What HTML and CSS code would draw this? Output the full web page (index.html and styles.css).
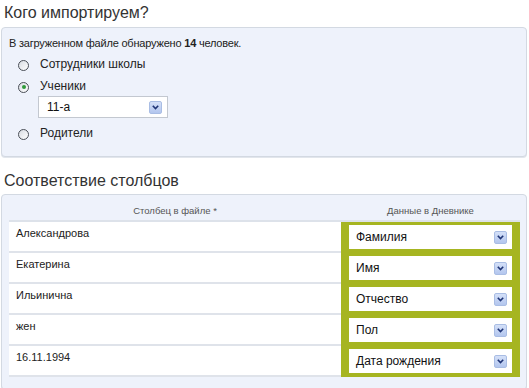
FILE: index.html
```html
<!DOCTYPE html>
<html lang="ru">

<head>
    <meta charset="UTF-8">
    <meta name="viewport" content="width=device-width, initial-scale=1.0">
    <title>Импорт</title>
    <link rel="stylesheet" href="styles.css">
</head>

<body>
    <div class="page">
        <h2 class="title">Кого импортируем?</h2>
        <div class="panel panel-who">
            <p class="note">В загруженном файле обнаружено <b>14</b> человек.</p>
            <div class="radio-row">
                <span class="radio"></span>
                <span class="radio-label">Сотрудники школы</span>
            </div>
            <div class="radio-row">
                <span class="radio checked"></span>
                <span class="radio-label">Ученики</span>
            </div>
            <div class="select select-class">
                <span class="select-text">11-а</span>
                <span class="select-btn">
                    <svg width="7" height="5" viewBox="0 0 7 5"><path d="M0.8 0.8 L3.5 3.6 L6.2 0.8" fill="none" stroke="#1f3475" stroke-width="1.6"/></svg>
                </span>
            </div>
            <div class="radio-row radio-last">
                <span class="radio"></span>
                <span class="radio-label">Родители</span>
            </div>
        </div>

        <h2 class="title title-second">Соответствие столбцов</h2>
        <div class="panel panel-map">
            <table class="map">
                <thead>
                    <tr>
                        <th class="col-file">Столбец в файле *</th>
                        <th class="col-diary">Данные в Дневнике</th>
                    </tr>
                </thead>
                <tbody>
                    <tr>
                        <td class="cell-file">Александрова</td>
                        <td class="cell-diary">
                            <div class="select"><span class="select-text">Фамилия</span><span class="select-btn"><svg width="7" height="5" viewBox="0 0 7 5"><path d="M0.8 0.8 L3.5 3.6 L6.2 0.8" fill="none" stroke="#1f3475" stroke-width="1.6"/></svg></span></div>
                        </td>
                    </tr>
                    <tr>
                        <td class="cell-file">Екатерина</td>
                        <td class="cell-diary">
                            <div class="select"><span class="select-text">Имя</span><span class="select-btn"><svg width="7" height="5" viewBox="0 0 7 5"><path d="M0.8 0.8 L3.5 3.6 L6.2 0.8" fill="none" stroke="#1f3475" stroke-width="1.6"/></svg></span></div>
                        </td>
                    </tr>
                    <tr>
                        <td class="cell-file">Ильинична</td>
                        <td class="cell-diary">
                            <div class="select"><span class="select-text">Отчество</span><span class="select-btn"><svg width="7" height="5" viewBox="0 0 7 5"><path d="M0.8 0.8 L3.5 3.6 L6.2 0.8" fill="none" stroke="#1f3475" stroke-width="1.6"/></svg></span></div>
                        </td>
                    </tr>
                    <tr>
                        <td class="cell-file">жен</td>
                        <td class="cell-diary">
                            <div class="select"><span class="select-text">Пол</span><span class="select-btn"><svg width="7" height="5" viewBox="0 0 7 5"><path d="M0.8 0.8 L3.5 3.6 L6.2 0.8" fill="none" stroke="#1f3475" stroke-width="1.6"/></svg></span></div>
                        </td>
                    </tr>
                    <tr>
                        <td class="cell-file">16.11.1994</td>
                        <td class="cell-diary">
                            <div class="select"><span class="select-text">Дата рождения</span><span class="select-btn"><svg width="7" height="5" viewBox="0 0 7 5"><path d="M0.8 0.8 L3.5 3.6 L6.2 0.8" fill="none" stroke="#1f3475" stroke-width="1.6"/></svg></span></div>
                        </td>
                    </tr>
                </tbody>
            </table>
        </div>
    </div>
</body>

</html>
```

FILE: styles.css
```css
body {
    margin: 0;
    padding: 0;
    background-color: #fff;
    font-family: 'Liberation Sans', Arial, sans-serif;
    color: #222;
}

.page {
    padding: 0 2px 0 1px;
}

.title {
    font-size: 16px;
    font-weight: normal;
    line-height: 20px;
    color: #333;
    margin: 3px 0 4px 3px;
}

.title-second {
    margin-top: 14px;
    margin-bottom: 3px;
}

.panel {
    background-color: #eef2fb;
    border: 1px solid #d3d9e2;
    border-radius: 4px;
    box-shadow: 0 1px 0 #e2e6ec;
}

.panel-who {
    padding: 8px 7px 12px 7px;
}

.note {
    font-size: 11px;
    letter-spacing: -0.2px;
    line-height: 14px;
    margin: 0 0 3px 0;
}

.radio-row {
    display: flex;
    align-items: center;
    height: 22px;
    padding-left: 9px;
}

.radio-last {
    margin-top: 4px;
}

.radio {
    width: 9px;
    height: 9px;
    border: 1px solid #4a4f57;
    border-radius: 50%;
    background: linear-gradient(135deg, #d8dce2, #fff);
    position: relative;
    margin-top: 2px;
}

.radio.checked::after {
    content: "";
    position: absolute;
    left: 2.5px;
    top: 2.5px;
    width: 4px;
    height: 4px;
    border-radius: 50%;
    background-color: #2f9a3a;
}

.radio-label {
    font-size: 12px;
    margin-left: 11px;
    color: #222;
}

.select {
    display: flex;
    align-items: center;
    justify-content: space-between;
    box-sizing: border-box;
    height: 24px;
    background-color: #fff;
    padding: 0 5px 0 7px;
    font-size: 12px;
    color: #111;
}

.select-class {
    width: 130px;
    height: 22px;
    margin: -1px 0 0 29px;
    border: 1px solid #c3c8d0;
    padding-left: 8px;
}

.select-btn {
    display: flex;
    align-items: center;
    justify-content: center;
    box-sizing: border-box;
    width: 13px;
    height: 13px;
    border: 1px solid #a9bde4;
    border-radius: 2px;
    background: linear-gradient(#d4e0f8, #b3c6ee);
}

.panel-map {
    padding: 0 6px 12px 7px;
}

.map {
    width: 511px;
    border-collapse: separate;
    border-spacing: 0;
}

.map th {
    font-size: 9.5px;
    font-weight: normal;
    line-height: 12px;
    color: #555;
    padding: 10px 0 3px 0;
    border-bottom: 2px solid #dde2ea;
    text-align: center;
}

.col-file {
    width: 332px;
}

.cell-file {
    background-color: #fff;
    font-size: 11px;
    line-height: 14px;
    vertical-align: top;
    padding: 4px 7px;
    border-bottom: 2px solid #dfe3ea;
    height: 21px;
}

.cell-diary {
    background-color: #a6b521;
    padding: 3px 8px 4px 8px;
}
```
